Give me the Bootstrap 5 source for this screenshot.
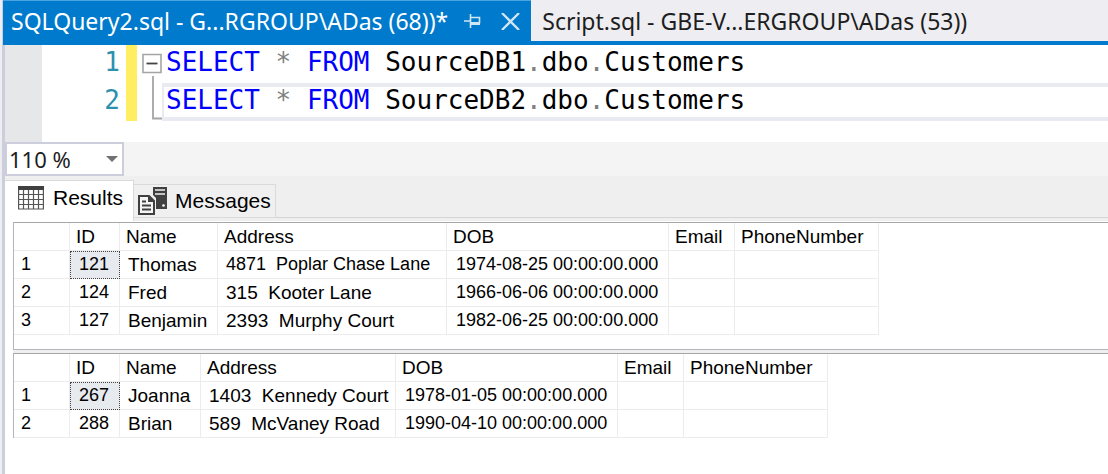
<!DOCTYPE html>
<html lang="en">
<head>
<meta charset="utf-8">
<meta name="viewport" content="width=device-width, initial-scale=1">
<title>SQLQuery2.sql</title>
<link href="https://cdn.jsdelivr.net/npm/bootstrap@5.3.0/dist/css/bootstrap.min.css" rel="stylesheet">
<style>
:root { --accent: #007acc; --chrome: #eeeef2; --edge: #cccedb; --pane-edge: #b4b4ba; --cell-edge: #ececec; }
body { background: var(--chrome); color: #000; font-family: "Liberation Sans", Arial, sans-serif; padding-left: 2px; }
.shell { border-left: 3px solid var(--edge); }

/* document tabs */
.doc-tabs { background: var(--chrome); border-bottom: 4px solid var(--accent); margin-left: -2px; font-family: "Noto Sans", "Segoe UI", sans-serif; font-size: 23px; line-height: 40px; }
.doc-tab { color: #1e1e1e; padding: 1px 11px 0 11px; }
.doc-tab.active { background: var(--accent); color: #fff; padding-left: 8px; box-shadow: inset 0 1px #4aa3dd; }
.doc-tab a { color: inherit; }
.tab-tool { color: #d0e6f5; line-height: 0; }
.tab-tools { gap: 20px; }

/* editor */
.editor { background: #fff; font: 26px/34px "DejaVu Sans Mono", Consolas, monospace; padding-bottom: 21px; }
.margin-strip { width: 37px; background: #e6e7e8; margin-bottom: -21px; }
.code-line { height: 38px; }
.line-no { width: 78px; color: #2b91af; text-align: right; }
.changed { width: 11px; margin: 0 5px 0 6px; background: #ffee62; }
.fold { width: 20px; }
.code-text { padding-left: 4px; font: inherit; }
.current { box-shadow: inset 0 4px #eaeaf2, inset 0 -4px #eaeaf2, inset 2px 0 #eaeaf2; }
.kw { color: #00f; }
.op { color: #808080; }

/* zoom bar */
.zoom-bar { background: #f4f4f4; height: 34px; }
.zoom-pick { appearance: none; width: 119px; height: 34px; border: 2px solid var(--edge); border-radius: 0; padding: 0 2px; color: #1e1e1e; font: 22px/30px "Noto Sans", "Segoe UI", sans-serif;
  background: #fff url("data:image/svg+xml,%3Csvg xmlns='http://www.w3.org/2000/svg' width='12' height='6'%3E%3Cpath d='M0 0h12L6 6z' fill='%23717171'/%3E%3C/svg%3E") no-repeat right 4px center; }

/* result tabs */
.result-tabs { background: #efefef; padding-top: 4px; }
.result-tabs::after { content: ""; flex: 1; border-bottom: 1px solid #d5d5d5; margin-bottom: 3px; }
.result-tab.btn { border: 1px solid #dadada; font-size: 21px; line-height: 32px; border-radius: 0; color: #000; }
.result-tab.btn.active { background: #fff; border-width: 1px 1px 0 0; padding: 0 10px 6px 13px; gap: 9px; }
.result-tab.btn.idle { background: #f0f0f0; border-left: 0; margin: 4px 0 3px; padding: 0 4px 0 4px; gap: 8px; }

/* result grids */
.results { background: #fff; padding: 1px 0 0 8px; }
.pane { border-top: 1px solid #a5a5aa; border-left: 1px solid var(--pane-edge); background: #fff; }
.pane.split { border-bottom: 1px solid var(--pane-edge); padding-bottom: 14px; }
.splitter { height: 3px; background: #efefef; }
.grid-data { table-layout: fixed; border-collapse: separate; border-spacing: 0; font-size: 19px; line-height: 27px; }
.grid-data th, .grid-data td { height: 28px; padding: 0 0 0 9px; border-right: 1px solid var(--cell-edge); border-bottom: 1px solid var(--cell-edge); white-space: pre; font-weight: 400; }
.grid-data thead th { padding-left: 6px; }
.grid-data tbody th { padding-left: 7px; font-size: 18px; }
.grid-data td:nth-child(3), .grid-data td:nth-child(4) { padding-left: 8px; }
.grid-data .num, .grid-data .stamp, .grid-data .long-text { font-size: 18px; }
.grid-data td.picked { background: #e7ebf0; outline: 1px dotted #444; outline-offset: -1px; }
.c-row { width: 56px; } .c-id { width: 50px; } .c-mail { width: 66px; } .c-dob { width: 222px; } .c-phone { width: 144px; }
.first-set { width: 865px; } .first-set .c-name { width: 98px; } .first-set .c-addr { width: 229px; }
.second-set { width: 814px; } .second-set .c-name { width: 81px; } .second-set .c-addr { width: 195px; }
</style>
</head>
<body>
<main class="shell min-vh-100 bg-white">
  <nav class="doc-tabs d-flex" aria-label="Open documents">
    <div class="doc-tab active d-flex align-items-center">
      <a href="#query" class="text-decoration-none text-nowrap">SQLQuery2.sql - G...RGROUP\ADas (68))*</a>
      <div class="tab-tools d-flex align-items-center ms-3">
        <button type="button" class="tab-tool btn border-0 p-0" aria-label="Pin tab">
          <svg width="17" height="14" viewBox="0 0 17 14" fill="none" stroke="currentColor" stroke-width="1.6"><path d="M0 7h6M6.500 0v14M6.500 3.500h9v6"/><path d="M6.500 9.500h9.500" stroke-width="3"/></svg>
        </button>
        <button type="button" class="tab-tool btn border-0 p-0" aria-label="Close tab">
          <svg width="19" height="17" viewBox="0 0 19 17" fill="none" stroke="currentColor" stroke-width="2.300"><path d="M1 0l17 17M18 0L1 17"/></svg>
        </button>
      </div>
    </div>
    <div class="doc-tab"><a href="#script" class="text-decoration-none text-nowrap">Script.sql - GBE-V...ERGROUP\ADas (53))</a></div>
  </nav>

  <section id="query" class="editor d-flex" aria-label="Query editor">
    <div class="margin-strip flex-shrink-0"></div>
    <div class="flex-grow-1">
      <div class="code-line d-flex">
        <span class="line-no">1</span><span class="changed"></span>
        <span class="fold"><svg class="d-block" width="20" height="38" viewBox="0 0 20 38" fill="none"><path d="M1 9.500h18v18H1z" stroke="#a5a5a5" stroke-width="1.600"/><path d="M4.500 18.500h11" stroke="#444" stroke-width="1.800"/><path d="M11 31v7" stroke="#a5a5a5" stroke-width="1.800"/></svg></span>
        <code class="code-text flex-grow-1 text-nowrap text-reset"><span class="kw">SELECT</span> <span class="op">*</span> <span class="kw">FROM</span> SourceDB1<span class="op">.</span>dbo<span class="op">.</span>Customers</code>
      </div>
      <div class="code-line d-flex">
        <span class="line-no">2</span><span class="changed"></span>
        <span class="fold"><svg class="d-block" width="20" height="38" viewBox="0 0 20 38" fill="none"><path d="M11 0v35.500h9" stroke="#a5a5a5" stroke-width="1.800"/></svg></span>
        <code class="code-text current flex-grow-1 text-nowrap text-reset"><span class="kw">SELECT</span> <span class="op">*</span> <span class="kw">FROM</span> SourceDB2<span class="op">.</span>dbo<span class="op">.</span>Customers</code>
      </div>
    </div>
  </section>

  <div class="zoom-bar">
    <select class="zoom-pick d-block" aria-label="Zoom"><option>110 %</option></select>
  </div>

  <div class="result-tabs d-flex">
    <button type="button" class="result-tab active btn d-flex align-items-center">
      <svg width="26" height="24" viewBox="0 0 26 24"><path fill="#fff" stroke="#555" stroke-width="1.200" d="M.6 1h24.800v22H.6z"/><path stroke="#555" stroke-width="1.200" d="M0 8.500h26M0 13.500h26M0 18.500h26M5.500 3v20M10.500 3v20M15.500 3v20M20.500 3v20"/><path fill="#404040" d="M0 0h26v4H0z"/></svg>
      Results
    </button>
    <button type="button" class="result-tab idle btn d-flex align-items-center">
      <svg width="29" height="28" viewBox="0 0 29 28"><path fill="#404040" d="M15 0h14v22H18V11l-3-3z"/><path stroke="#f0f0f0" stroke-width="1.500" d="M17 3h10M17 7h10"/><circle cx="25.500" cy="18.500" r="1.300" fill="#fff"/><path fill="#f4f4f4" stroke="#404040" stroke-width="2" d="M1 9h10l5 5v13H1z"/><path fill="#404040" d="M10 8l7 7h-7z"/><path stroke="#404040" stroke-width="1.800" d="M4 14.500h4M4 18.500h9M4 22.500h9"/></svg>
      Messages
    </button>
  </div>

  <section class="results" aria-label="Results">
    <div class="pane split">
      <table class="grid-data first-set">
        <colgroup><col class="c-row"><col class="c-id"><col class="c-name"><col class="c-addr"><col class="c-dob"><col class="c-mail"><col class="c-phone"></colgroup>
        <thead><tr><th></th><th scope="col">ID</th><th scope="col">Name</th><th scope="col">Address</th><th scope="col">DOB</th><th scope="col">Email</th><th scope="col">PhoneNumber</th></tr></thead>
        <tbody>
          <tr><th scope="row">1</th><td class="num picked">121</td><td>Thomas</td><td class="long-text">4871  Poplar Chase Lane</td><td class="stamp">1974-08-25 00:00:00.000</td><td></td><td></td></tr>
          <tr><th scope="row">2</th><td class="num">124</td><td>Fred</td><td>315  Kooter Lane</td><td class="stamp">1966-06-06 00:00:00.000</td><td></td><td></td></tr>
          <tr><th scope="row">3</th><td class="num">127</td><td>Benjamin</td><td>2393  Murphy Court</td><td class="stamp">1982-06-25 00:00:00.000</td><td></td><td></td></tr>
        </tbody>
      </table>
    </div>
    <div class="splitter"></div>
    <div class="pane">
      <table class="grid-data second-set">
        <colgroup><col class="c-row"><col class="c-id"><col class="c-name"><col class="c-addr"><col class="c-dob"><col class="c-mail"><col class="c-phone"></colgroup>
        <thead><tr><th></th><th scope="col">ID</th><th scope="col">Name</th><th scope="col">Address</th><th scope="col">DOB</th><th scope="col">Email</th><th scope="col">PhoneNumber</th></tr></thead>
        <tbody>
          <tr><th scope="row">1</th><td class="num picked">267</td><td>Joanna</td><td>1403  Kennedy Court</td><td class="stamp">1978-01-05 00:00:00.000</td><td></td><td></td></tr>
          <tr><th scope="row">2</th><td class="num">288</td><td>Brian</td><td>589  McVaney Road</td><td class="stamp">1990-04-10 00:00:00.000</td><td></td><td></td></tr>
        </tbody>
      </table>
    </div>
  </section>
</main>
<script src="https://cdn.jsdelivr.net/npm/bootstrap@5.3.0/dist/js/bootstrap.bundle.min.js"></script>
</body>
</html>
